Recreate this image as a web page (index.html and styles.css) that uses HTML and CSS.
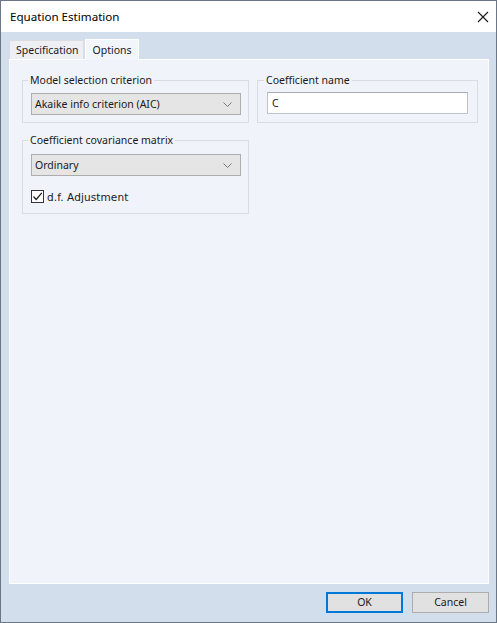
FILE: index.html
```html
<!DOCTYPE html>
<html>
<head>
<meta charset="utf-8">
<link rel="stylesheet" href="styles.css">
</head>
<body>
<div class="window">
  <div class="titlebar">
    <span class="title">Equation Estimation</span>
    <svg class="close" width="12" height="12" viewBox="0 0 12 12"><path d="M1 1 L11 11 M11 1 L1 11" stroke="#1a1a1a" stroke-width="1.1" fill="none"/></svg>
  </div>
  <div class="client">
    <div class="tabs">
      <div class="tab">Specification</div>
      <div class="tab active">Options</div>
    </div>
    <div class="panel">
      <div class="col left">
        <fieldset class="group g1">
          <legend>Model selection criterion</legend>
          <div class="combo"><span>Akaike info criterion (AIC)</span><svg width="9" height="5" viewBox="0 0 9 5"><path d="M0.5 0.5 L4.5 4.5 L8.5 0.5" stroke="#7a7a7a" stroke-width="1" fill="none"/></svg></div>
        </fieldset>
        <fieldset class="group g2">
          <legend>Coefficient covariance matrix</legend>
          <div class="combo"><span>Ordinary</span><svg width="9" height="5" viewBox="0 0 9 5"><path d="M0.5 0.5 L4.5 4.5 L8.5 0.5" stroke="#7a7a7a" stroke-width="1" fill="none"/></svg></div>
          <label class="check"><span class="box"><svg width="11" height="11" viewBox="0 0 11 11"><path d="M1.5 5.5 L4.2 8.5 L9.8 1.8" stroke="#1a1a1a" stroke-width="1.2" fill="none"/></svg></span><span class="checklabel">d.f. Adjustment</span></label>
        </fieldset>
      </div>
      <div class="col right">
        <fieldset class="group g3">
          <legend>Coefficient name</legend>
          <div class="textbox">C</div>
        </fieldset>
      </div>
    </div>
    <div class="buttons">
      <div class="btn default">OK</div>
      <div class="btn">Cancel</div>
    </div>
  </div>
</div>
</body>
</html>
```
FILE: styles.css
```css
html, body {
  margin: 0;
  padding: 0;
  background: #ffffff;
}
body {
  font-family: "Noto Sans", "Open Sans", sans-serif;
  font-size: 10.5px;
  color: #1a1a1a;
}
.window {
  width: 497px;
  height: 623px;
  box-sizing: border-box;
  border: 1px solid #6b7686;
  display: flex;
  flex-direction: column;
}
.titlebar {
  height: 31px;
  flex: none;
  background: #ffffff;
  display: flex;
  align-items: center;
  justify-content: space-between;
  padding: 0 7px 0 9px;
}
.title {
  font-size: 11.6px;
  color: #000;
}
.close {
  display: block;
}
.client {
  flex: 1;
  background: #d3deec;
  display: flex;
  flex-direction: column;
  padding: 6px 7px 9px 8px;
}
.tabs {
  display: flex;
  align-items: flex-end;
  height: 21px;
}
.tab {
  height: 19px;
  line-height: 19px;
  padding: 0 4px 0 6px;
  background: #eeeff3;
  border: 1px solid #d9dde3;
  border-bottom: none;
  box-sizing: border-box;
  margin-right: 1px;
}
.tab.active {
  height: 21px;
  line-height: 20px;
  background: #f2f5fa;
  border-color: #ffffff;
  padding: 0 6px 0 7px;
  margin-bottom: -1px;
  position: relative;
  z-index: 1;
}
.panel {
  flex: 1;
  background: #f0f3f9;
  border: 1px solid #ffffff;
  display: flex;
  align-items: flex-start;
  padding: 13px 0 0 12px;
  gap: 8px;
}
.col {
  display: flex;
  flex-direction: column;
}
.col.left { width: 227px; }
.col.right { width: 221px; }
.group {
  margin: 0;
  border: 1px solid #d9dce1;
  padding: 5px 7px 7px 8px;
  min-width: 0;
}
.group legend {
  padding: 0 2px;
  margin-left: -3px;
  line-height: 15px;
  color: #1a1a1a;
}
.g2 {
  margin-top: 10px;
  padding-top: 6px;
  padding-bottom: 9px;
}
.g3 {
  padding: 4px 9px 8px 9px;
}
.combo {
  height: 22px;
  box-sizing: border-box;
  border: 1px solid #adadad;
  background: #e5e5e5;
  display: flex;
  align-items: center;
  justify-content: space-between;
  padding: 0 8px 0 3px;
}
.combo svg { display: block; }
.check {
  display: flex;
  align-items: center;
  margin-top: 13px;
  height: 15px;
}
.box {
  width: 13px;
  height: 13px;
  box-sizing: border-box;
  border: 1px solid #333333;
  background: #ffffff;
  display: flex;
  align-items: center;
  justify-content: center;
}
.box svg { display: block; }
.checklabel {
  margin-left: 3px;
  font-family: "DejaVu Sans", sans-serif;
  font-size: 10.5px;
  letter-spacing: 0.1px;
}
.textbox {
  height: 22px;
  box-sizing: border-box;
  border: 1px solid #bfc3c9;
  border-top-color: #a9adb3;
  background: #ffffff;
  padding: 0 4px;
  line-height: 20px;
}
.buttons {
  display: flex;
  justify-content: flex-end;
  gap: 9px;
  margin-top: 8px;
}
.btn {
  width: 77px;
  height: 21px;
  box-sizing: border-box;
  border: 1px solid #adadad;
  background: #e1e1e1;
  text-align: center;
  line-height: 19px;
}
.btn.default {
  border: 1px solid #0078d7;
  box-shadow: inset 0 0 0 1px #0078d7;
}
```
